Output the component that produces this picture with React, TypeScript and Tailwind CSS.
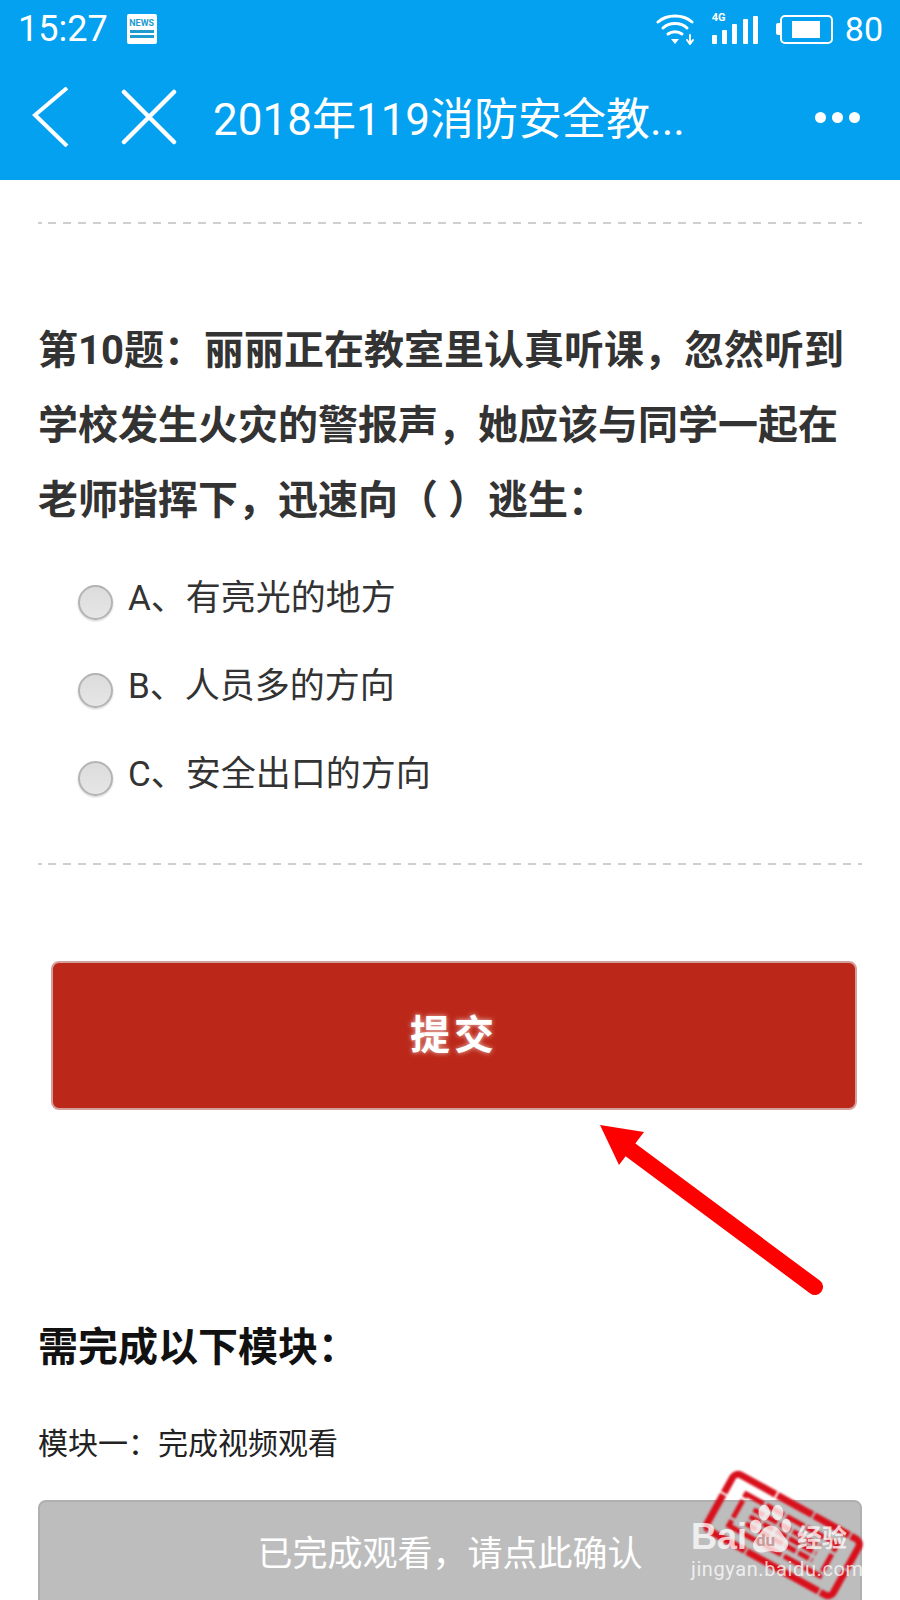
import React from 'react';

const options = ['A、有亮光的地方', 'B、人员多的方向', 'C、安全出口的方向'];

const Dashed = () => (
  <div className="h-[2px] bg-[repeating-linear-gradient(90deg,#cfcfcf_0,#cfcfcf_8px,transparent_8px,transparent_15px)] bg-[position:10px_0]" />
);

const StatusIcons = () => (
  <div className="flex items-center">
    <svg width="40" height="32" viewBox="0 0 40 32" className="mr-[16px]" fill="none" stroke="#fff" strokeLinecap="round">
      <path d="M2 9C11 1 27 1 36 9" strokeWidth="3" />
      <path d="M7 15C13 9 25 9 31 15" strokeWidth="3" />
      <path d="M12 21C16 18 22 18 26 21" strokeWidth="3" />
      <path d="M15 26H23L19 31Z" fill="#fff" stroke="none" />
      <path d="M34 22V29M31 27L34 31L37 27" strokeWidth="2" />
    </svg>
    <div className="relative mr-[18px] flex h-[30px] w-[46px] items-end justify-between">
      <span className="absolute left-0 top-[-2px] text-[11px] font-bold leading-none text-white">4G</span>
      <div className="h-[9px] w-[5px] rounded-[1px] bg-white" />
      <div className="h-[14px] w-[5px] rounded-[1px] bg-white" />
      <div className="h-[20px] w-[5px] rounded-[1px] bg-white" />
      <div className="h-[25px] w-[5px] rounded-[1px] bg-white" />
      <div className="h-[28px] w-[5px] rounded-[1px] bg-white" />
    </div>
    <div className="mr-[12px] flex items-center">
      <div className="h-[12px] w-[4px] rounded-l-[2px] bg-white" />
      <div className="flex h-[29px] w-[53px] items-center rounded-[5px] border-[2.5px] border-white px-[10px]">
        <div className="h-[17px] w-[28px] bg-white" />
      </div>
    </div>
    <span className="text-[34px] leading-none text-white">80</span>
  </div>
);

export default function App() {
  return (
    <div className="relative h-[1600px] w-[900px] overflow-hidden bg-white font-['Roboto','Noto_Sans_CJK_SC',sans-serif]">
      <header className="h-[180px] bg-[#03a1ef]">
        <div className="flex h-[56px] items-center justify-between pl-[18px] pr-[17px] pt-[2px]">
          <div className="flex items-center">
            <span className="text-[36px] leading-none text-white">15:27</span>
            <div className="ml-[19px] flex h-[30px] w-[30px] flex-col items-center rounded-[2px] bg-white pt-[4px]">
              <span className="text-[9px] font-bold leading-[10px] text-[#1f9bd0]">NEWS</span>
              <div className="mt-[2px] h-[3px] w-[24px] bg-[#1f9bd0]" />
              <div className="mt-[2px] h-[3px] w-[24px] bg-[#1f9bd0]" />
            </div>
          </div>
          <StatusIcons />
        </div>
        <div className="flex h-[124px] items-center">
          <svg width="40" height="60" viewBox="0 0 40 60" className="ml-[32px] mb-[2px]" fill="none" stroke="#fff" strokeWidth="4">
            <path d="M35 1L3 28L35 59" />
          </svg>
          <svg width="56" height="56" viewBox="0 0 56 56" className="ml-[49px] mb-[2px]" stroke="#fff" strokeWidth="4.5" strokeLinecap="round">
            <path d="M3 3L53 53M53 3L3 53" />
          </svg>
          <h1 className="ml-[36px] mt-[3px] w-[490px] text-[44px] font-normal leading-none text-white">2018年119消防安全教...</h1>
          <div className="ml-[112px] mb-[2px] flex gap-[6px]">
            <div className="h-[11px] w-[11px] rounded-full bg-white" />
            <div className="h-[11px] w-[11px] rounded-full bg-white" />
            <div className="h-[11px] w-[11px] rounded-full bg-white" />
          </div>
        </div>
      </header>

      <main className="px-[38px]">
        <div className="pt-[42px]">
          <Dashed />
        </div>
        <p className="mt-[89px] text-[40px] font-bold leading-[75px] text-[#333]">
          第10题：丽丽正在教室里认真听课，忽然听到学校发生火灾的警报声，她应该与同学一起在老师指挥下，迅速向（ ）逃生：
        </p>
        <div className="mt-[34px] flex flex-col gap-[36px] pl-[40px]">
          {options.map((o) => (
            <label key={o} className="flex h-[52px] items-center">
              <span className="mt-[8px] h-[35px] w-[35px] rounded-full border-[2px] border-[#b3b3b3] bg-[linear-gradient(#dcdcdc,#e6e6e6)] shadow-[0_1px_2px_rgba(0,0,0,0.2)]" />
              <span className="ml-[15px] text-[35px] leading-none text-[#333]">{o}</span>
            </label>
          ))}
        </div>
        <div className="mt-[63px]">
          <Dashed />
        </div>
        <div className="ml-[13px] mr-[5px] mt-[96px] flex h-[149px] items-center justify-center rounded-[8px] border-[2px] border-[#d4a09b] bg-[#bb2819]">
          <span className="text-[40px] font-bold leading-none tracking-[4px] text-white [text-shadow:0_0_5px_rgba(255,255,255,0.7)]">提交</span>
        </div>
        <h2 className="mt-[214px] text-[40px] font-bold leading-[48px] text-[#111]">需完成以下模块：</h2>
        <p className="mt-[52px] text-[30px] leading-[40px] text-[#222]">模块一：完成视频观看</p>
        <div className="mt-[36px] flex h-[130px] items-start justify-center rounded-[8px] border-[2px] border-[#b0b0b0] bg-[#bdbdbd] pt-[30px]">
          <span className="text-[35px] leading-[46px] text-white">已完成观看，请点此确认</span>
        </div>
      </main>

      {/* red arrow */}
      <svg width="900" height="1600" viewBox="0 0 900 1600" className="pointer-events-none absolute left-0 top-0">
        <path d="M628 1148L815 1287" stroke="#fe0000" strokeWidth="16" strokeLinecap="round" />
        <path d="M600 1125L644 1132L619 1165Z" fill="#fe0000" />
      </svg>

      {/* baidu watermark */}
      <svg width="176" height="140" viewBox="0 0 176 140" className="pointer-events-none absolute left-[695px] top-[1465px] blur-[1px]" fill="none" stroke="#d8101c">
        <g transform="rotate(29 88 70)">
          <rect x="16" y="38" width="144" height="64" rx="6" strokeWidth="7" strokeDasharray="40 2" />
          <rect x="36" y="52" width="104" height="36" strokeWidth="5" strokeDasharray="20 3" />
          <path d="M50 62H126M50 70H126M50 78H126" strokeWidth="5" strokeDasharray="12 3" />
        </g>
      </svg>
      <div className="pointer-events-none absolute left-[691px] top-[1498px] w-[170px] text-white/75">
        <div className="flex h-[58px] items-end">
          <span className="font-['Liberation_Sans',sans-serif] text-[36px] font-bold leading-[38px]">Bai</span>
          <div className="relative mb-[2px] h-[50px] w-[44px] shrink-0">
            <svg width="44" height="50" viewBox="0 0 46 58" preserveAspectRatio="none" className="absolute left-0 top-0" fill="currentColor">
              <ellipse cx="9" cy="26" rx="6" ry="8" />
              <ellipse cx="18" cy="10" rx="6" ry="9" />
              <ellipse cx="32" cy="10" rx="6" ry="9" />
              <ellipse cx="41" cy="25" rx="5" ry="8" />
              <path d="M25 25C33 25 37 36 42 42C46 50 38 57 32 56C27 55 23 54 18 56C10 58 3 50 8 42C13 36 17 25 25 25Z" />
            </svg>
            <span className="absolute left-[9px] top-[26px] text-[17px] font-bold leading-[20px] text-[#c99a9a]">du</span>
          </div>
          <span className="ml-[6px] text-[25px] font-bold leading-[34px]">经验</span>
        </div>
        <div className="mt-[1px] whitespace-nowrap text-[20px] leading-[24px] tracking-[0.6px]">jingyan.baidu.com</div>
      </div>
    </div>
  );
}
